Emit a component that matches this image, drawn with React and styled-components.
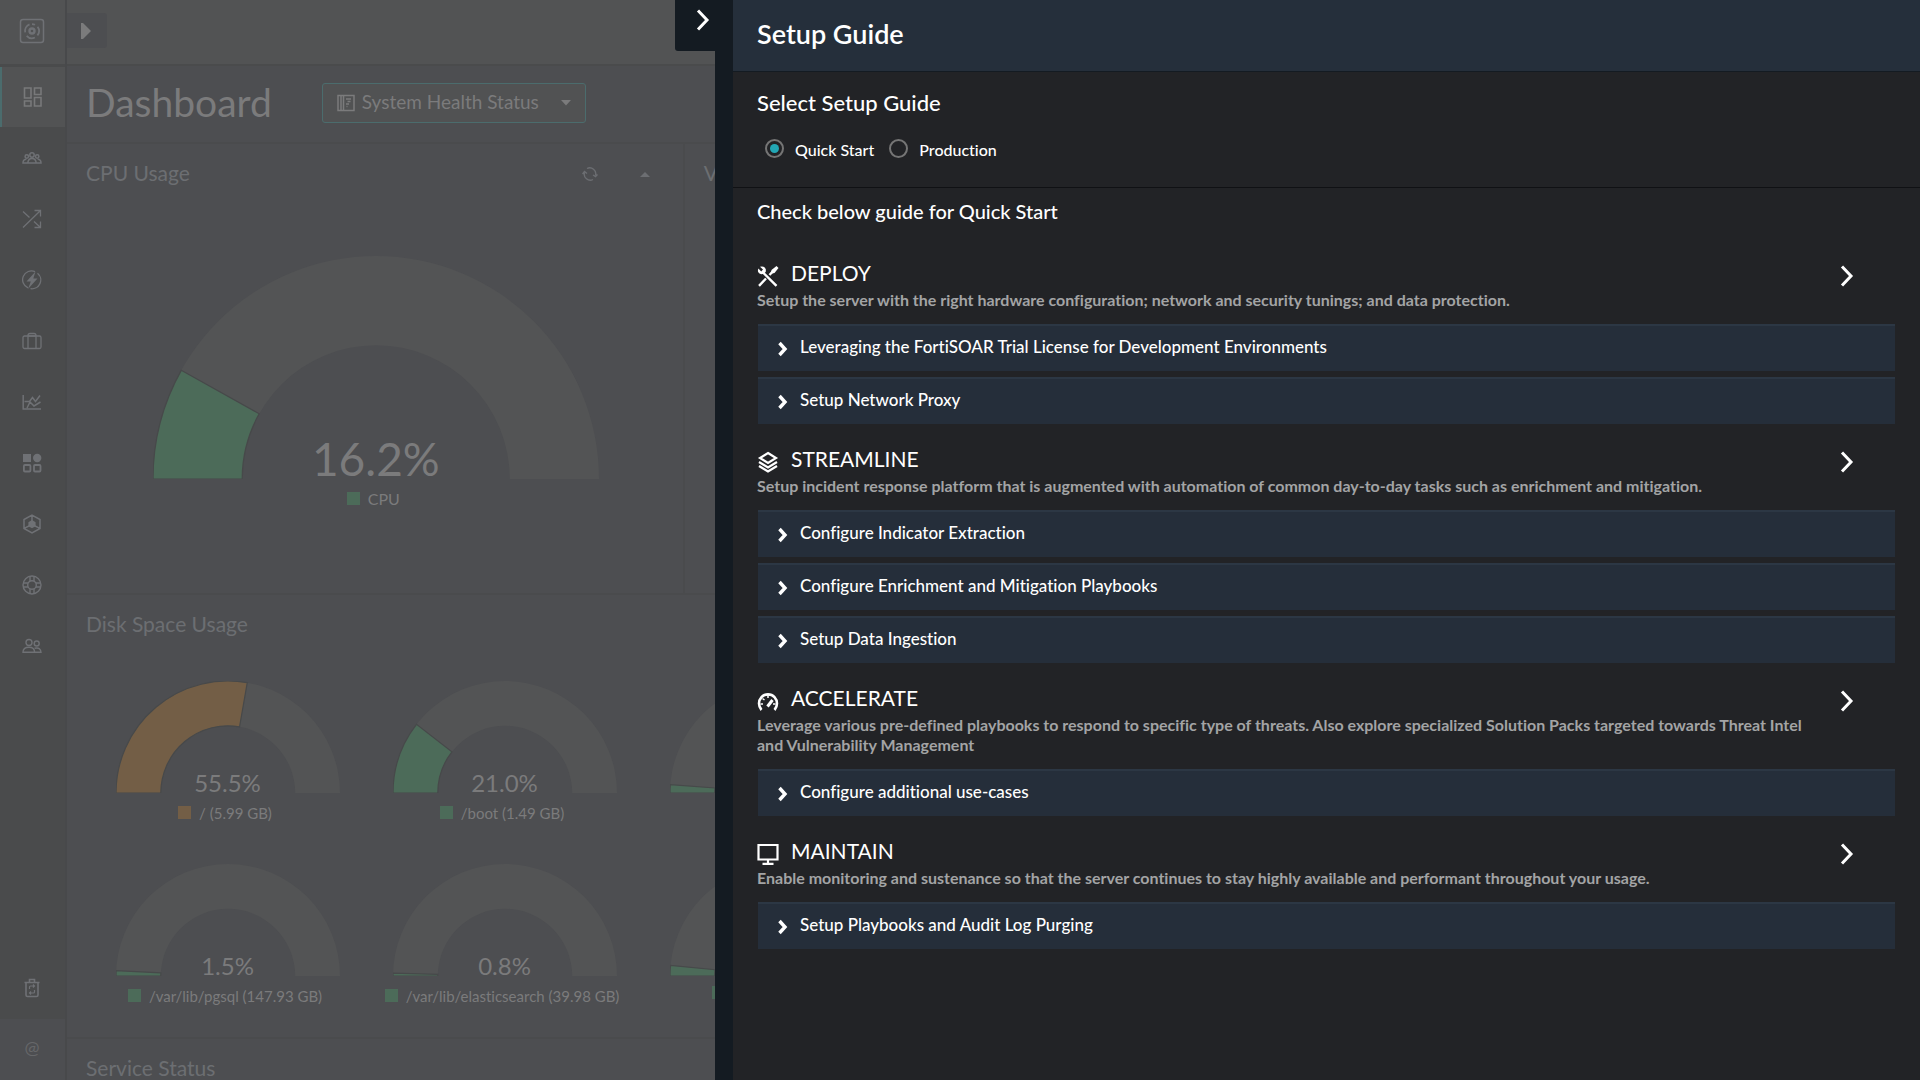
import React, { useState } from "react";
import styled, { createGlobalStyle } from "styled-components";

const GlobalStyle = createGlobalStyle`
  *, *::before, *::after { box-sizing: border-box; }
  body {
    margin: 0;
    background: #4d4e51;
    font-family: Lato, "Open Sans", sans-serif;
    font-variant-ligatures: none;
  }
  button, select, input { font-family: inherit; font-variant-ligatures: inherit; }
  h1, h2, h3, p { margin: 0; font-weight: 400; }
  svg { display: block; flex: none; }
`;

const Page = styled.div`
  display: flex;
  height: 100vh;
  overflow: hidden;
  background: #4d4e51;
`;

/* ---------- sidebar ---------- */

const Sidebar = styled.nav`
  display: flex;
  flex-direction: column;
  flex: none;
  width: 65px;
  background: #4a4b4c;
  color: #6f7175;
`;

const Logo = styled.div`
  display: flex;
  align-items: center;
  justify-content: center;
  height: 64px;
  margin-bottom: 3px;
  padding: 0 1px 3px 0;
  background: #525354;
`;

const NavItem = styled.a`
  display: flex;
  align-items: center;
  justify-content: center;
  height: 60px;
  margin-bottom: 1px;
  padding-right: 1px;
  color: ${(p) => (p.$active ? "#78797a" : "inherit")};
  background: ${(p) => (p.$active ? "#525354" : "transparent")};
  border-left: ${(p) => (p.$active ? "2px solid #4b6c6d" : "0")};
`;

const NavBottom = styled.div`
  margin-top: auto;
`;

const Account = styled.a`
  display: flex;
  align-items: center;
  justify-content: center;
  height: 61px;
  padding: 0 1px 6px 0;
  background: #4d4e51;
  color: #666769;
  font-size: 18px;
  text-decoration: none;
`;

/* ---------- dashboard ---------- */

const Main = styled.main`
  flex: 1;
  min-width: 0;
  border-left: 2px solid #48494b;
  color: #7b7b7c;
`;

const TopBar = styled.div`
  display: flex;
  align-items: center;
  height: 66px;
  padding-bottom: 3px;
  background: #525354;
  border-bottom: 2px solid #4a4b4c;
`;

const Expand = styled.button`
  display: flex;
  align-items: center;
  width: 40px;
  height: 35px;
  padding: 0 14px;
  border: 0;
  border-radius: 0 3px 3px 0;
  background: #4d4e51;
  color: #7b7b7c;
`;

const TitleBar = styled.header`
  display: flex;
  align-items: center;
  gap: 50px;
  height: 78px;
  padding: 0 19px 2px;
  border-bottom: 2px solid #4a4b4d;
`;

const Title = styled.h1`
  padding-bottom: 2px;
  font-size: 39px;
  line-height: 48px;
`;

const Picker = styled.label`
  display: grid;
  align-items: center;
  width: 264px;
  height: 40px;
  border: 1px solid #4b6c6d;
  border-radius: 3px;
  background: #515253;

  > * { grid-area: 1 / 1; }
  > svg { margin-left: 14px; }
  > svg:last-child { justify-self: end; margin-right: 14px; }
`;

const PickerSelect = styled.select`
  width: 100%;
  height: 38px;
  padding: 0 36px 4px 39px;
  border: 0;
  background: transparent;
  color: inherit;
  font-size: 19px;
  appearance: none;
`;

const WidgetRow = styled.div`
  display: grid;
  grid-template-columns: 1fr 1fr 1fr;
  height: 451px;
  border-bottom: 2px solid #4a4b4d;
`;

const Widget = styled.section`
  padding: 16px 19px;
  border-right: 2px solid #4a4b4d;
`;

const WideWidget = styled.section`
  height: 444px;
  padding: 16px 19px;
  border-bottom: 2px solid #4a4b4d;
`;

const WidgetHead = styled.div`
  display: flex;
  align-items: center;
  gap: 42px;
  height: 28px;
  padding-right: 14px;
  color: #6c6e72;
`;

const WidgetTitle = styled.h2`
  flex: 1;
  padding-bottom: 2px;
  font-size: 21px;
  line-height: 26px;
`;

const CpuBody = styled.div`
  padding: 68px 0 0 2px;
`;

const DiskGrid = styled.div`
  display: grid;
  grid-template-columns: repeat(3, 277px);
  row-gap: 41px;
  padding: 42px 0 0 3px;
`;

const GaugeBox = styled.div`
  display: flex;
  flex-direction: column;
  align-items: center;
`;

const Dial = styled.div`
  display: grid;
  justify-items: center;
  align-items: end;
  > * { grid-area: 1 / 1; }
`;

const Percent = styled.span`
  font-size: ${(p) => (p.$large ? 46 : 24)}px;
  line-height: ${(p) => (p.$large ? 40 : 20)}px;
`;

const Legend = styled.div`
  display: flex;
  align-items: center;
  gap: 8px;
  min-width: ${(p) => (p.$min ? p.$min : 0)}px;
  margin-top: 10px;
  padding-right: 5px;
  font-size: ${(p) => (p.$large ? 16 : 15)}px;
  line-height: 20px;
`;

const Swatch = styled.i`
  width: 13px;
  height: 13px;
  margin-bottom: 2px;
  background: ${(p) => p.$color};
`;

/* ---------- drawer ---------- */

const Drawer = styled.aside`
  position: fixed;
  top: 0;
  right: 0;
  bottom: 0;
  display: flex;
  align-items: flex-start;
  width: 1245px;
  max-width: 100vw;
  color: #ffffff;
`;

const DrawerTab = styled.button`
  display: flex;
  align-items: center;
  flex: none;
  width: 40px;
  height: 51px;
  padding: 0 0 11px 21px;
  border: 0;
  border-radius: 0 0 0 3px;
  background: #141b22;
  color: #ffffff;
`;

const Panel = styled.div`
  flex: 1;
  align-self: stretch;
  min-width: 0;
  overflow: hidden;
  border-left: 18px solid #141b22;
  background: #222326;
`;

const PanelHead = styled.header`
  height: 72px;
  padding: 16px 24px;
  border-bottom: 1px solid #141b22;
  background: #252f3b;
`;

const PanelTitle = styled.h2`
  font-size: 27px;
  font-weight: 600;
  line-height: 36px;
`;

const Choice = styled.fieldset`
  height: 116px;
  margin: 0;
  padding: 18px 24px 0;
  border: 0;
  border-bottom: 1px solid #101114;
`;

const ChoiceTitle = styled.legend`
  float: left;
  width: 100%;
  padding: 0;
  font-size: 22px;
  font-weight: 500;
  line-height: 26px;
`;

const Options = styled.div`
  clear: both;
  display: flex;
  gap: 15px;
  padding: 20px 0 0 8px;
`;

const Option = styled.label`
  display: flex;
  align-items: center;
  gap: 11px;
  font-size: 16px;
  font-weight: 500;
  line-height: 20px;

  span { padding-top: 4px; }
`;

const Radio = styled.input`
  width: 19px;
  height: 19px;
  margin: 0;
  padding: 3px;
  appearance: none;
  border: 2px solid #757575;
  border-radius: 50%;
  background: ${(p) => (p.checked ? "#22a7b5" : "transparent")};
  background-clip: content-box;
`;

const Guide = styled.div`
  padding: 10px 25px 0 24px;
`;

const GuideIntro = styled.p`
  margin-bottom: 34px;
  font-size: 20px;
  font-weight: 500;
  line-height: 26px;
`;

const Stage = styled.section`
  margin-bottom: 20px;
`;

const StageHead = styled.div`
  display: flex;
  align-items: center;
  gap: 12px;
  height: 32px;
  padding: 4px 41px 0 0;
`;

const StageTitle = styled.h3`
  flex: 1;
  padding-bottom: 6px;
  font-size: 21px;
  line-height: 26px;
`;

const IconButton = styled.button`
  padding: 0;
  border: 0;
  background: transparent;
  color: #ffffff;
`;

const StageText = styled.p`
  margin-bottom: 14px;
  padding-right: 80px;
  color: #a3a4a5;
  font-size: 16px;
  font-weight: 700;
  line-height: 20px;
`;

const Steps = styled.div`
  display: flex;
  flex-direction: column;
  gap: 6px;
  margin-left: 1px;
`;

const Step = styled.button`
  display: flex;
  align-items: center;
  gap: 10px;
  height: 47px;
  padding: 0 18px;
  border: 0;
  border-top: 2px solid #2c3744;
  background: #252e3a;
  color: #ffffff;
  font-size: 17px;
  font-weight: 500;
  text-align: left;

  span { padding-bottom: 4px; }
`;

/* ---------- drawings ---------- */

const Svg = ({ s = 20, w = s, h = s, box = "0 0 20 20", sw = 1.3, children }) => (
  <svg width={w} height={h} viewBox={box} fill="none" stroke="currentColor" strokeWidth={sw} aria-hidden="true">
    {children}
  </svg>
);

const LogoIcon = () => (
  <Svg s={26} box="0 0 26 26" sw={1.5}>
    <rect x="1.5" y="1.5" width="23" height="23" rx="2.5" />
    <circle cx="13" cy="13" r="2.5" strokeWidth="2.4" />
    <path d="M10.5 6.4a7 7 0 0 0-4.3 8M7.7 17.8a7 7 0 0 0 8.2 1.7M18.4 17.4a7 7 0 0 0 .2-8.6M16 6.8a7 7 0 0 0-3-.7" strokeWidth="1.8" />
  </Svg>
);

const navIcons = {
  Dashboard: (
    <Svg sw={1.6}>
      <path d="M1.500 1h6.500v10h-6.500zM11.500 1h6.500v6.500h-6.500zM1.500 14h6.500v5h-6.500zM11.500 10.500h6.500v8.500h-6.500z" />
    </Svg>
  ),
  Incidents: (
    <Svg sw={1.5}>
      <circle cx="10" cy="7" r="2.2" />
      <circle cx="4.800" cy="8.500" r="1.700" />
      <circle cx="15.200" cy="8.500" r="1.700" />
      <path d="M5.800 15c.2-3.200 1.800-4.600 4.200-4.600s4 1.400 4.200 4.600zM5.600 15H1c0-2.400 1.200-3.800 3.400-3.800M14.400 15H19c0-2.400-1.200-3.800-3.400-3.800" />
    </Svg>
  ),
  Playbooks: (
    <Svg>
      <path d="M1 18.500 18.500 1.500M12.500 1.500h6v6M1 2.500l6.500 6M12 12.500l6.500 6M18.500 12.500v6h-6" />
    </Svg>
  ),
  Automation: (
    <Svg>
      <path d="M13 1.600A8.800 8.800 0 1 0 6 17.900M15.500 3.200A8.800 8.800 0 0 1 8.500 18.700" />
      <path d="M13.500 1.500 4.500 11.500h4.300L6 19l9.500-10.500h-4.200z" fill="currentColor" stroke="none" />
    </Svg>
  ),
  Resources: (
    <Svg>
      <rect x="1" y="5" width="18" height="12.500" rx="1.500" />
      <path d="M6 17.500V4.500Q6 2.500 8 2.500h4q2 0 2 2v13M6 5h8" />
    </Svg>
  ),
  Reports: (
    <Svg sw={1.5}>
      <path d="M1.200 3v14H19M2.500 9.500h5l3-4 3 4 4.500-6M5 16l3-6 4 4 6.500-4" />
    </Svg>
  ),
  Widgets: (
    <Svg sw={1.8}>
      <rect x="1" y="1" width="8" height="8" fill="currentColor" stroke="none" />
      <circle cx="15.200" cy="5" r="4.200" fill="currentColor" stroke="none" />
      <rect x="1.900" y="12" width="6.500" height="6.500" rx="1" />
      <rect x="12" y="12" width="6.500" height="6.500" rx="1" />
    </Svg>
  ),
  Connectors: (
    <Svg sw={1.5}>
      <path d="M10 1.200 18 5.500v9L10 18.800 2 14.500v-9zM10 1.500V8M2.500 14.200 8 11.500M17.500 14.200 12 11.500" />
      <path d="M10 6l3.600 2.200v4L10 14.300l-3.600-2.100v-4z" fill="currentColor" stroke="none" />
    </Svg>
  ),
  Help: (
    <Svg sw={1.4}>
      <circle cx="10" cy="10" r="9" />
      <circle cx="10" cy="10" r="4.300" />
      <path d="M8 1.400v4.500M12 1.400v4.500M8 14v4.500M12 14v4.500M1.400 8h4.500M1.400 12h4.500M14 8h4.500M14 12h4.500" />
    </Svg>
  ),
  Users: (
    <Svg sw={1.4}>
      <circle cx="7" cy="6.500" r="3" />
      <circle cx="14.700" cy="7.500" r="2.500" />
      <path d="M1 16.300c0-3.600 2.200-5 6-5s5.600 1.500 5.600 5zM12.600 12.300c4-1 6.200.5 6.400 4h-6.200" />
    </Svg>
  ),
};

const TrashIcon = () => (
  <Svg sw={1.6}>
    <path d="M2.500 4.500h15M4 4.500v12.500q0 1.500 1.500 1.500h9q1.500 0 1.500-1.500V4.500M7.500 4V1.500h5V4" />
    <path d="M7.500 11V9q0-1 1-1h4M11 6.500 12.500 8 11 9.500M12.500 12v2q0 1-1 1h-4M9 13.500 7.500 15 9 16.500" strokeWidth="1.2" />
  </Svg>
);

const Chevron = () => (
  <Svg w={14} h={22} box="0 0 14 22" sw={3}>
    <path d="M2 1.500 11 11l-9 9.500" />
  </Svg>
);

const StepChevron = () => (
  <Svg w={14} h={16} box="0 0 14 16" sw={3.4}>
    <path d="M3.500 2l5.500 6-5.500 6" />
  </Svg>
);

const stageIcons = {
  tools: (
    <Svg s={22} box="0 0 22 22" sw={2.4}>
      <path d="M6 7.500 19.500 20.800M2 20.800 9 13.500" />
      <path d="M12.500 10 17 5" />
      <path d="M3 1.800 6 4.600 4.200 6.400 1.400 3.600Q0 7 2.500 8.600q2 1 4 .2L8.700 7q.8-2.500-.7-4.200Q6 .8 3 1.800z" fill="currentColor" stroke="none" />
      <path d="M14.500 5 19.500 1l2 2L17.500 8l-3.500.8z" fill="currentColor" stroke="none" />
    </Svg>
  ),
  layers: (
    <Svg s={22} box="0 0 22 22" sw={2.2}>
      <path d="M11 2l8 5-8 5-8-5zM2 11l9 5.500 9-5.500M2 15l9 5.500 9-5.500" />
    </Svg>
  ),
  gauge: (
    <Svg s={22} box="0 0 22 22" sw={2.6}>
      <path d="M4.500 20A9.500 9.500 0 0 1 4.500 7.200 8.800 8.800 0 0 1 17.500 7.200 9.500 9.500 0 0 1 17.500 20" />
      <path d="M10.500 16.500 15.500 10" strokeWidth="3" />
      <path d="M11 5v3M5.500 8.500l2 1.500M3.500 14h2.500M16 14h2.500" strokeWidth="1.5" />
    </Svg>
  ),
  monitor: (
    <Svg s={22} box="0 0 22 22" sw={2.2}>
      <path d="M1.500 2h19v14.500h-19zM11 16.500V21M5.500 20.800h11" />
    </Svg>
  ),
};

const GREEN = "#4c6b59";
const ORANGE = "#735e46";

const point = (center, radius, t) =>
  `${center - radius * Math.cos(Math.PI * t)} ${center - radius * Math.sin(Math.PI * t)}`;

const band = (r, t) => {
  const inner = r * 0.6;
  return `M${point(r, r, 0)}A${r} ${r} 0 0 1 ${point(r, r, t)}L${point(r, inner, t)}A${inner} ${inner} 0 0 0 ${point(r, inner, 0)}Z`;
};

const Gauge = ({ value, text, label, color = GREEN, large, min }) => {
  const r = large ? 223 : 112;
  return (
    <GaugeBox>
      <Dial>
        <svg width={r * 2} height={r} viewBox={`0 0 ${r * 2} ${r}`} aria-hidden="true">
          <path d={band(r, 1)} fill="#535455" />
          <path d={band(r, value / 100)} fill={color} stroke="#47494a" strokeWidth="1.2" />
        </svg>
        {text && <Percent $large={large}>{text}</Percent>}
      </Dial>
      <Legend $large={large} $min={min}>
        {(label || min) && <Swatch $color={color} />}
        {label}
      </Legend>
    </GaugeBox>
  );
};

const disks = [
  { value: 55.5, text: "55.5%", label: "/ (5.99 GB)", color: ORANGE },
  { value: 21, text: "21.0%", label: "/boot (1.49 GB)" },
  { value: 2.4 },
  { value: 1.5, text: "1.5%", label: "/var/lib/pgsql (147.93 GB)" },
  { value: 0.8, text: "0.8%", label: "/var/lib/elasticsearch (39.98 GB)" },
  { value: 3, min: 140 },
];

const stages = [
  {
    icon: "tools",
    title: "DEPLOY",
    text: "Setup the server with the right hardware configuration; network and security tunings; and data protection.",
    steps: ["Leveraging the FortiSOAR Trial License for Development Environments", "Setup Network Proxy"],
  },
  {
    icon: "layers",
    title: "STREAMLINE",
    text: "Setup incident response platform that is augmented with automation of common day-to-day tasks such as enrichment and mitigation.",
    steps: ["Configure Indicator Extraction", "Configure Enrichment and Mitigation Playbooks", "Setup Data Ingestion"],
  },
  {
    icon: "gauge",
    title: "ACCELERATE",
    text: "Leverage various pre-defined playbooks to respond to specific type of threats. Also explore specialized Solution Packs targeted towards Threat Intel and Vulnerability Management",
    steps: ["Configure additional use-cases"],
  },
  {
    icon: "monitor",
    title: "MAINTAIN",
    text: "Enable monitoring and sustenance so that the server continues to stay highly available and performant throughout your usage.",
    steps: ["Setup Playbooks and Audit Log Purging"],
  },
];

export default function App() {
  const [mode, setMode] = useState("Quick Start");
  return (
    <>
      <GlobalStyle />
      <Page>
        <Sidebar>
          <Logo><LogoIcon /></Logo>
          {Object.entries(navIcons).map(([name, icon]) => (
            <NavItem key={name} href="#" aria-label={name} $active={name === "Dashboard"}>{icon}</NavItem>
          ))}
          <NavBottom>
            <NavItem href="#" aria-label="Recycle bin"><TrashIcon /></NavItem>
            <Account href="#">@</Account>
          </NavBottom>
        </Sidebar>
        <Main>
          <TopBar>
            <Expand aria-label="Expand navigation">
              <svg width="11" height="18" viewBox="0 0 11 18" aria-hidden="true">
                <path d="M0 1v16h2l8-8-8-8z" fill="currentColor" />
              </svg>
            </Expand>
          </TopBar>
          <TitleBar>
            <Title>Dashboard</Title>
            <Picker aria-label="Dashboard view">
              <PickerSelect>
                <option>System Health Status</option>
              </PickerSelect>
              <Svg s={18} box="0 0 18 18" sw={1.5}>
                <path d="M1 1.500h16v15H1zM4 1.500v15M6.500 1.500v15M9 5h5M10.500 7.500h3M9 10h3M9.500 12.500h1" />
              </Svg>
              <svg width="10" height="6" viewBox="0 0 10 6" aria-hidden="true">
                <path d="M0 0h10L5 5.500z" fill="currentColor" />
              </svg>
            </Picker>
          </TitleBar>
          <WidgetRow>
            <Widget>
              <WidgetHead>
                <WidgetTitle>CPU Usage</WidgetTitle>
                <Svg s={16} box="0 0 16 16" sw={1.4}>
                  <path d="M5 2.500a6 6 0 0 1 8.500 7M11 13.500a6 6 0 0 1-8.500-7M.5 8l2-2.500L5 7.500M15.500 8.500l-2 2L11 9" />
                </Svg>
                <svg width="10" height="5" viewBox="0 0 10 5" aria-hidden="true">
                  <path d="M0 5h10L5 0z" fill="currentColor" />
                </svg>
              </WidgetHead>
              <CpuBody>
                <Gauge large value={16.2} text="16.2%" label="CPU" />
              </CpuBody>
            </Widget>
            <Widget>
              <WidgetHead><WidgetTitle>V</WidgetTitle></WidgetHead>
            </Widget>
          </WidgetRow>
          <WideWidget>
            <WidgetHead><WidgetTitle>Disk Space Usage</WidgetTitle></WidgetHead>
            <DiskGrid>
              {disks.map((d, i) => <Gauge key={i} {...d} />)}
            </DiskGrid>
          </WideWidget>
          <WideWidget>
            <WidgetHead><WidgetTitle>Service Status</WidgetTitle></WidgetHead>
          </WideWidget>
        </Main>
      </Page>

      <Drawer>
        <DrawerTab aria-label="Close setup guide"><Chevron /></DrawerTab>
        <Panel>
          <PanelHead><PanelTitle>Setup Guide</PanelTitle></PanelHead>
          <Choice>
            <ChoiceTitle>Select Setup Guide</ChoiceTitle>
            <Options>
              {["Quick Start", "Production"].map((name) => (
                <Option key={name}>
                  <Radio type="radio" name="guide" checked={mode === name} onChange={() => setMode(name)} />
                  <span>{name}</span>
                </Option>
              ))}
            </Options>
          </Choice>
          <Guide>
            <GuideIntro>Check below guide for {mode}</GuideIntro>
            {stages.map((stage) => (
              <Stage key={stage.title}>
                <StageHead>
                  {stageIcons[stage.icon]}
                  <StageTitle>{stage.title}</StageTitle>
                  <IconButton aria-label={`Open ${stage.title}`}><Chevron /></IconButton>
                </StageHead>
                <StageText>{stage.text}</StageText>
                <Steps>
                  {stage.steps.map((step) => (
                    <Step key={step}><StepChevron /><span>{step}</span></Step>
                  ))}
                </Steps>
              </Stage>
            ))}
          </Guide>
        </Panel>
      </Drawer>
    </>
  );
}
